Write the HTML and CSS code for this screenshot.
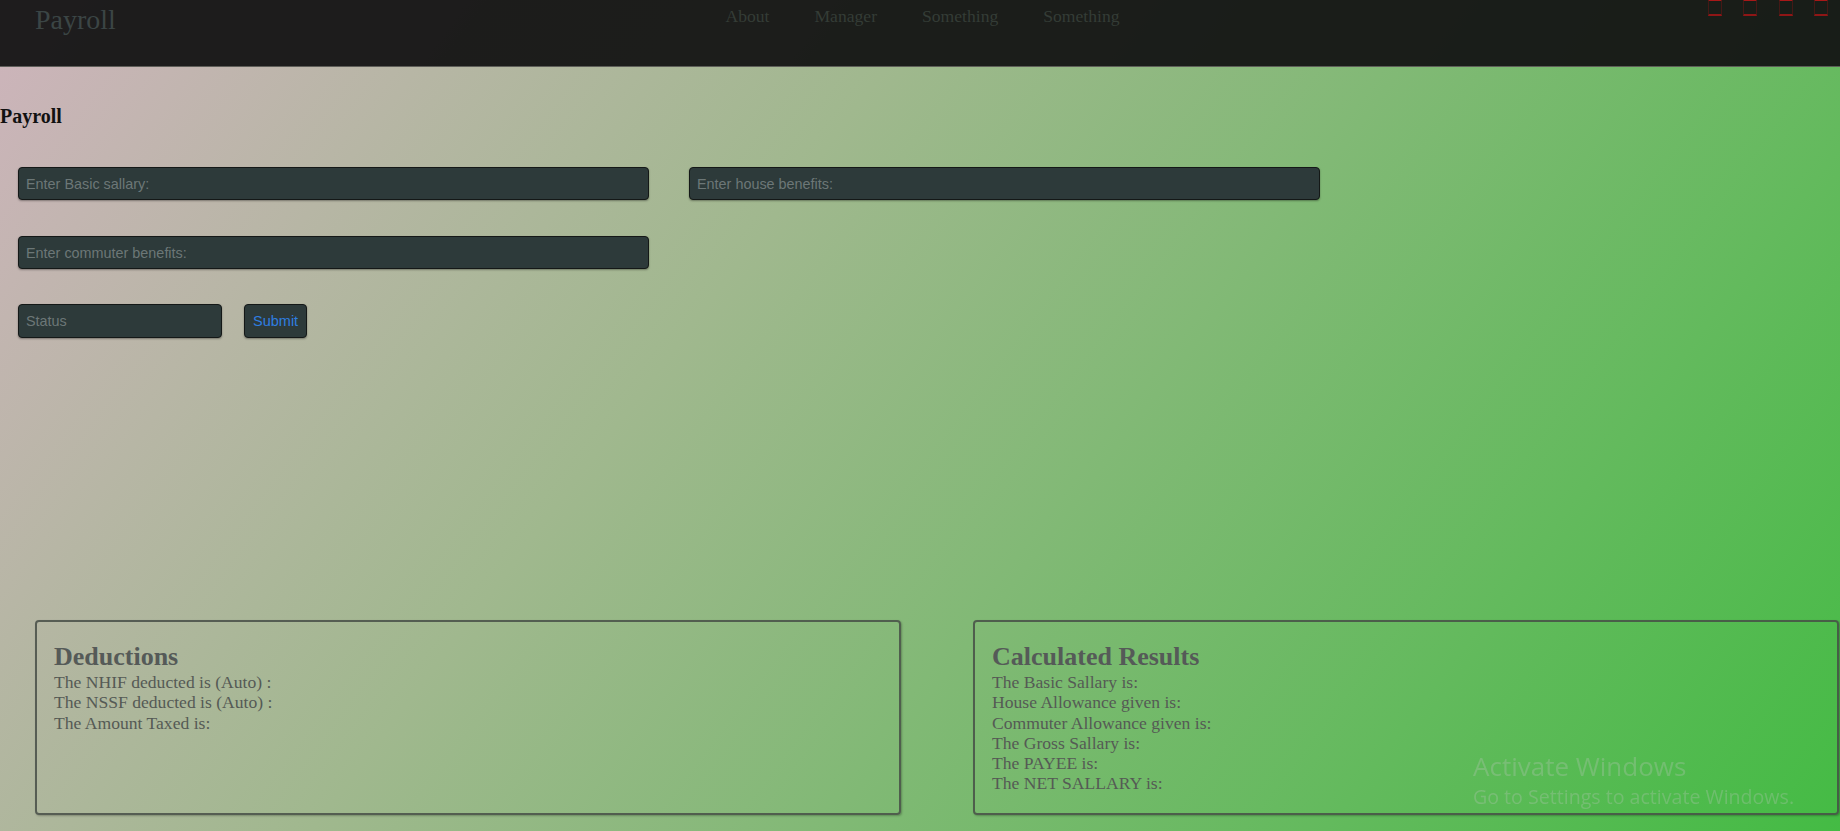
FILE: index.html
```html
<!DOCTYPE html>
<html lang="en">
<head>
<meta charset="utf-8">
<title>Payroll</title>
<link rel="stylesheet" href="styles.css">
</head>
<body>
<header class="topbar">
  <div class="brand">Payroll</div>
  <nav class="links">
    <a href="#">About</a>
    <a href="#">Manager</a>
    <a href="#">Something</a>
    <a href="#">Something</a>
  </nav>
  <div class="bars"><span></span><span></span><span></span><span></span></div>
</header>

<main class="page">
  <h1 class="page-title">Payroll</h1>
  <form class="payform">
    <div class="row">
      <input class="field wide" type="text" placeholder="Enter Basic sallary:">
      <input class="field wide" type="text" placeholder="Enter house benefits:">
    </div>
    <div class="row">
      <input class="field wide" type="text" placeholder="Enter commuter benefits:">
    </div>
    <div class="row row-tight">
      <input class="field status" type="text" placeholder="Status">
      <button class="submit" type="button">Submit</button>
    </div>
  </form>

  <section class="results">
    <div class="card">
      <h2 class="card-title">Deductions</h2>
      <p class="line">The NHIF deducted is (Auto) :</p>
      <p class="line">The NSSF deducted is (Auto) :</p>
      <p class="line">The Amount Taxed is:</p>
    </div>
    <div class="card">
      <h2 class="card-title">Calculated Results</h2>
      <p class="line">The Basic Sallary is:</p>
      <p class="line">House Allowance given is:</p>
      <p class="line">Commuter Allowance given is:</p>
      <p class="line">The Gross Sallary is:</p>
      <p class="line">The PAYEE is:</p>
      <p class="line">The NET SALLARY is:</p>
    </div>
  </section>
</main>

<div class="watermark">
  <div class="wm-title">Activate Windows</div>
  <div class="wm-sub">Go to Settings to activate Windows.</div>
</div>
</body>
</html>
```

FILE: styles.css
```css
* { box-sizing: border-box; }

html, body {
  margin: 0;
  padding: 0;
}

body {
  height: 831px;
  overflow: hidden;
  font-family: "Liberation Serif", "Times New Roman", serif;
  background: linear-gradient(127deg, rgb(206, 180, 188) 0%, rgb(160, 184, 142) 38%, rgb(68, 187, 68) 100%);
}

.topbar {
  height: 67px;
  display: grid;
  grid-template-columns: 1fr auto 1fr;
  align-items: start;
  background: rgba(20, 20, 20, 0.95);
  border-bottom: 1px solid rgba(150, 150, 140, 0.55);
}

.brand {
  padding-left: 35px;
  padding-top: 4px;
  font-size: 28px;
  line-height: 32px;
  color: #3b4545;
}

.links {
  display: flex;
  gap: 45px;
  padding-top: 6px;
  padding-left: 5px;
}

.links a {
  font-size: 17.6px;
  line-height: 20px;
  color: #343c36;
  text-decoration: none;
}

.bars {
  display: flex;
  justify-content: flex-end;
  gap: 21.5px;
  padding-right: 12px;
  margin-top: -1px;
}

.bars span {
  width: 14px;
  height: 17px;
  border: 1px solid rgba(150, 20, 20, 0.35);
  border-top: 2px solid #a81818;
  border-bottom: 2px solid #8e1616;
  filter: blur(0.5px);
}

.page-title {
  margin: 38px 0 0;
  font-size: 20px;
  line-height: 23px;
  font-weight: bold;
  color: #111;
}

.payform {
  padding-left: 18px;
  margin-top: 39px;
  display: flex;
  flex-direction: column;
  gap: 36px;
}

.row {
  display: flex;
  gap: 40px;
}

.row-tight {
  gap: 22px;
  margin-top: -1px;
}

.field {
  height: 33px;
  border: 1px solid #141817;
  border-radius: 4px;
  background: #2d3a3a;
  box-shadow: 0 1px 2px rgba(0, 0, 0, 0.35);
  padding: 0 7px;
  font-family: "Liberation Sans", Arial, sans-serif;
  font-size: 14.4px;
  color: #9aa3a3;
  outline: none;
}

.field::placeholder {
  color: #6c7777;
}

.wide { width: 631px; }

.status {
  width: 204px;
  height: 34px;
}

.submit {
  height: 34px;
  padding: 0 8px;
  border: 1px solid #141817;
  border-radius: 4px;
  background: #2d3a3a;
  box-shadow: 0 1px 2px rgba(0, 0, 0, 0.35);
  font-family: "Liberation Sans", Arial, sans-serif;
  font-size: 14.5px;
  color: #2f7ee0;
}

.results {
  display: flex;
  gap: 72px;
  padding-left: 35px;
  margin-top: 282px;
}

.card {
  width: 866px;
  border: 2px solid rgba(70, 78, 70, 0.85);
  border-radius: 4px;
  box-shadow: 1px 1px 2px rgba(0, 0, 0, 0.25);
  padding: 20px 17px 19px;
  color: #555a55;
}

.card-title {
  margin: 0;
  font-size: 26px;
  line-height: 30px;
  font-weight: bold;
  color: #555a58;
}

.line {
  margin: 0;
  font-size: 17.6px;
  line-height: 20.3px;
}

.watermark {
  position: fixed;
  left: 1473px;
  top: 750px;
  font-family: "Open Sans", "Noto Sans", sans-serif;
  color: rgba(190, 200, 190, 0.3);
}

.wm-title {
  font-size: 26px;
  line-height: 32px;
}

.wm-sub {
  font-size: 19.6px;
  line-height: 30px;
}
```
